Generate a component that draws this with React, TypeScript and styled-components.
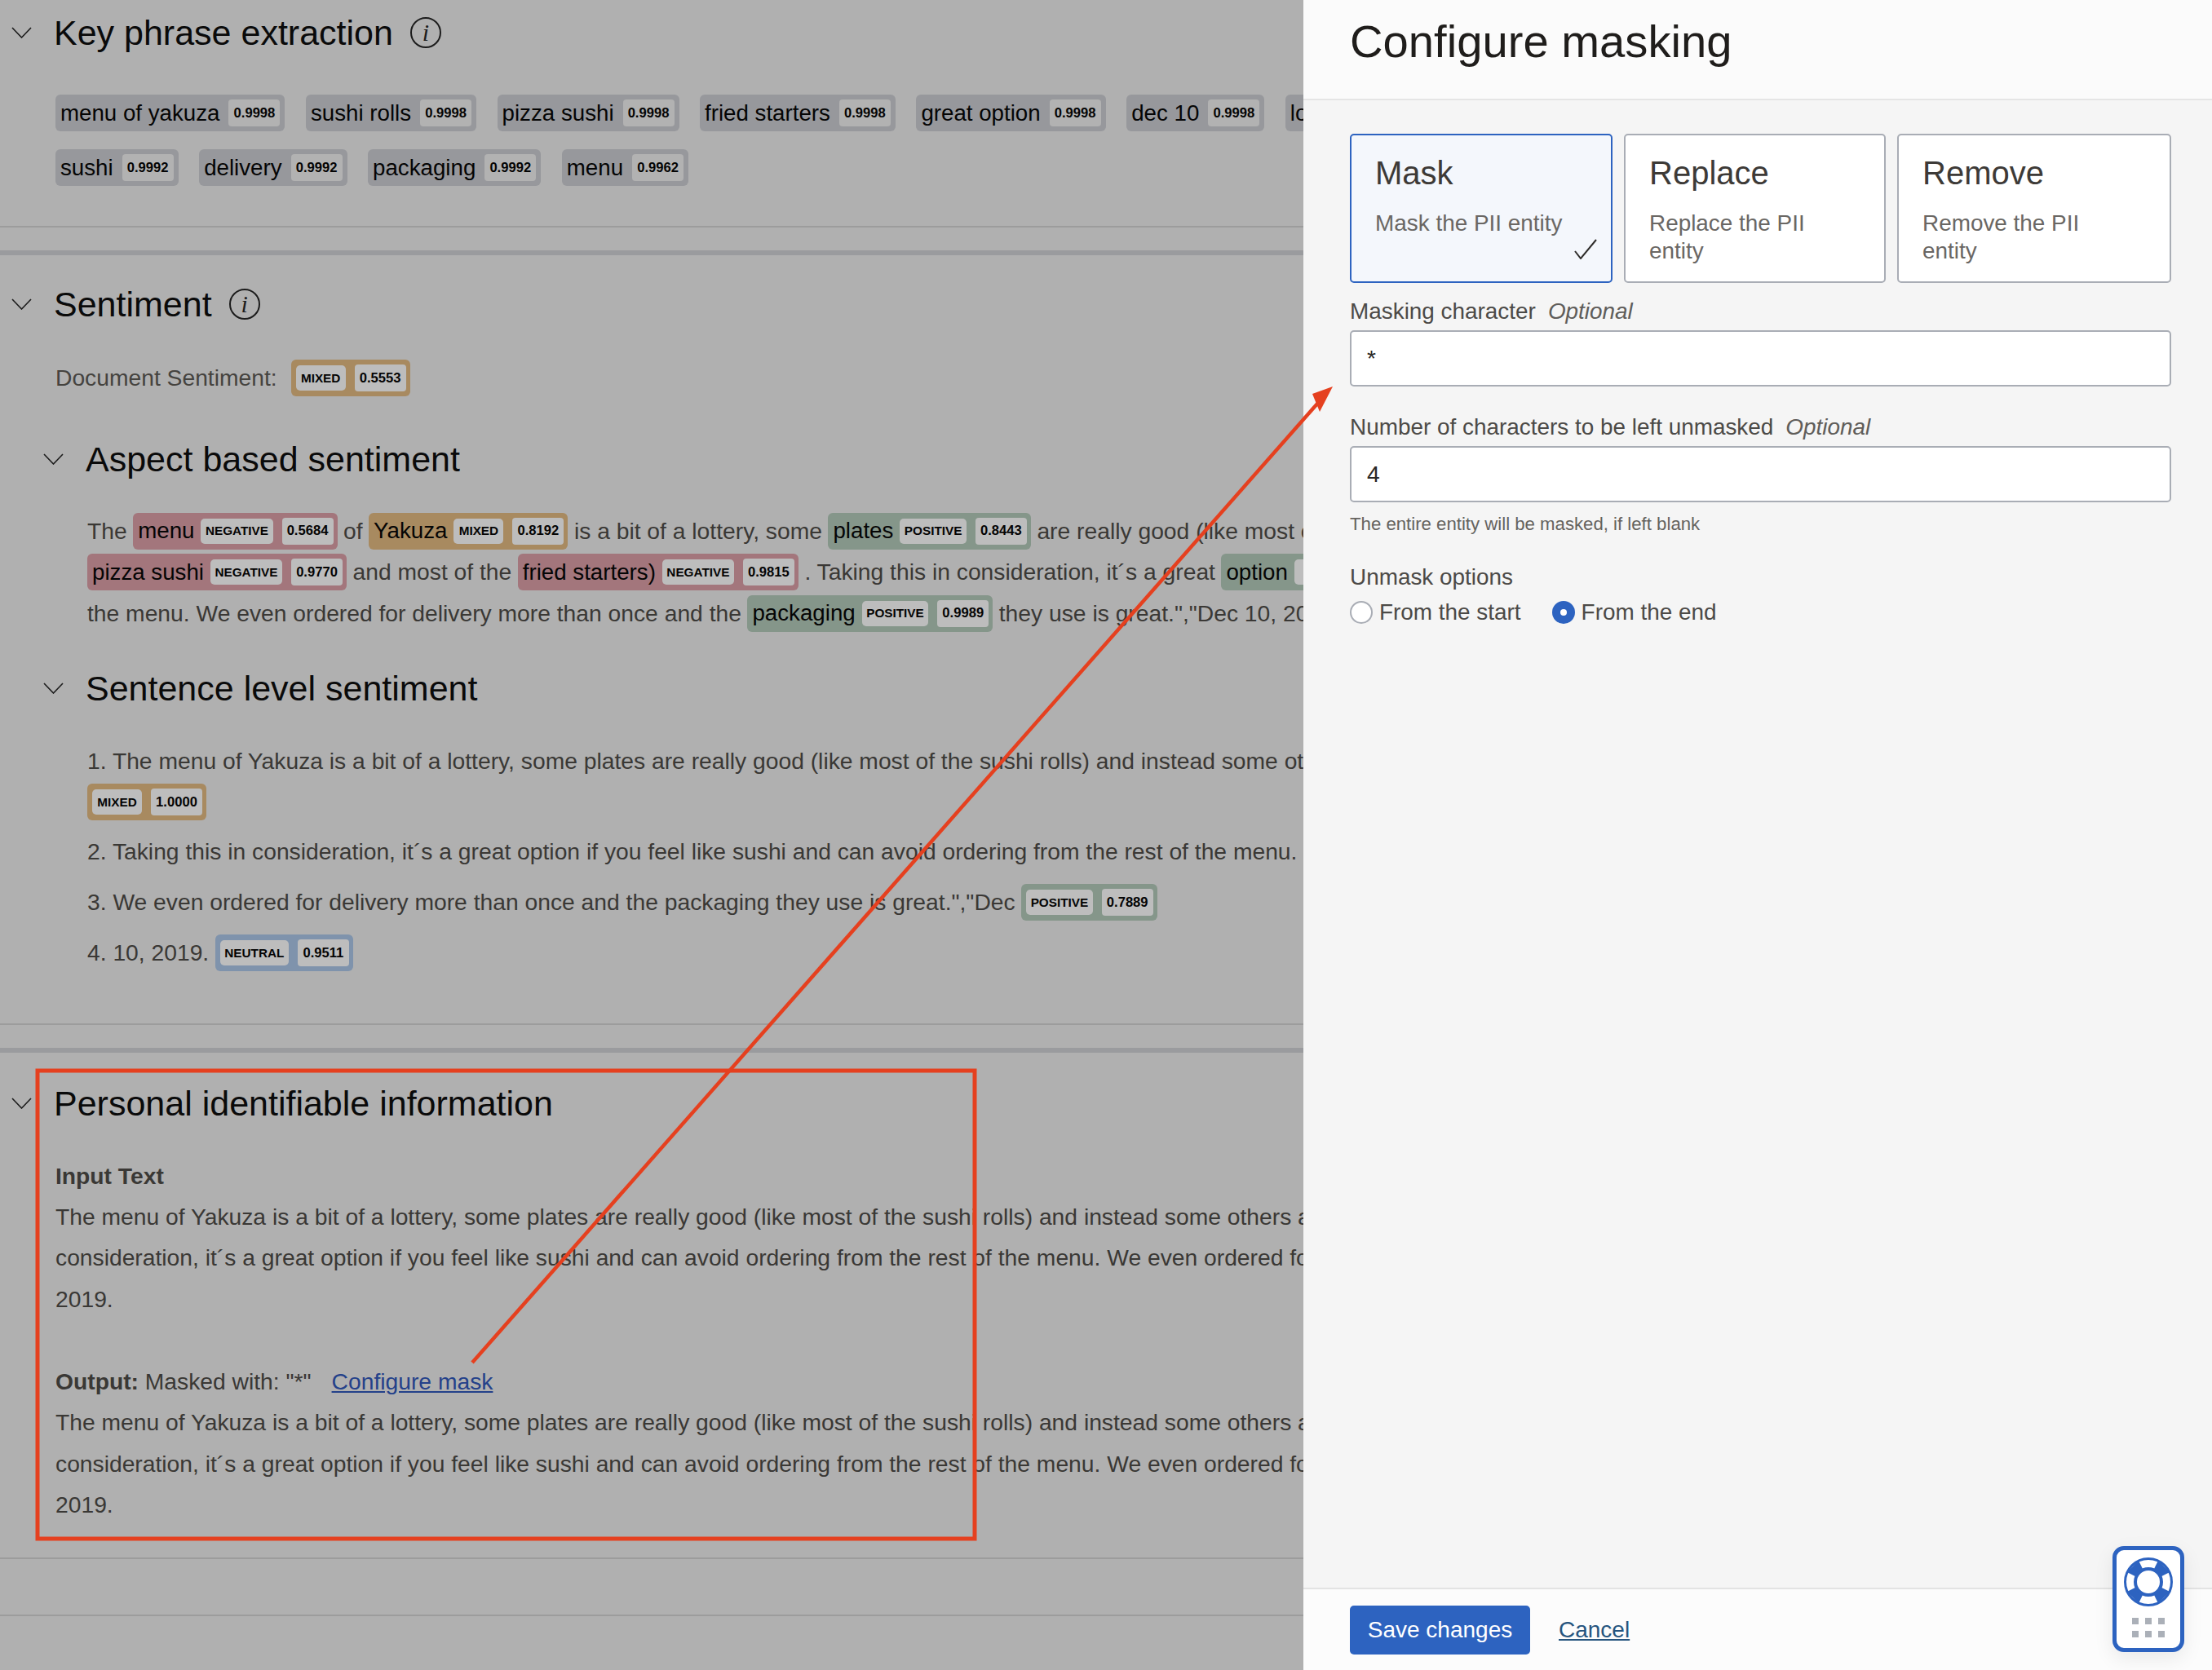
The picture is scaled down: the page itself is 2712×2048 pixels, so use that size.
import React from "react";
import styled, { createGlobalStyle } from "styled-components";

type Tone = "plain" | "negative" | "mixed" | "positive" | "neutral";

const TONES: Record<Tone, string> = {
    plain: "#97989c",
    negative: "#a3767c",
    mixed: "#a88a60",
    positive: "#85968a",
    neutral: "#7f93ac",
};

const BLUE = "#2d63c0";
const FIELD_BORDER = "#a9adb5";

const GlobalStyle = createGlobalStyle`
    html, body {
        margin: 0;
        padding: 0;
    }
    body {
        font-family: "Liberation Sans", Arial, sans-serif;
        font-size: 28.25px;
        color: #3a3835;
    }
`;

const Page = styled.div`
    position: relative;
    display: flex;
    width: 2712px;
    height: 2048px;
    overflow: hidden;
`;
const Main = styled.main`
    width: 1598px;
    flex: none;
    overflow: hidden;
    background: #b0b0b0;
`;
const FirstSection = styled.section`
    padding: 15px 0 49px;
    border-bottom: 2px solid #9c9c9c;
`;
const Section = styled.section<{ $top: number; $bottom: number }>`
    margin-top: 28px;
    padding: ${(p) => p.$top}px 0 ${(p) => p.$bottom}px;
    border-top: 6px solid #9a9b9e;
    border-bottom: 2px solid #9c9c9c;
`;
const Rule = styled.div`
    margin-top: 68px;
    border-top: 2px solid #9c9c9c;
`;
const HeadingRow = styled.div<{ $indent?: number }>`
    display: flex;
    align-items: center;
    height: 50px;
    padding-left: ${(p) => p.$indent ?? 14}px;
`;
const Chevron = styled.svg`
    width: 25px;
    height: 14px;
    margin-right: 27px;
    flex: none;
    fill: none;
    stroke: #1c1c1c;
    stroke-width: 1.6;
`;
const Heading = styled.h2`
    margin: 0;
    font-size: 43px;
    font-weight: 400;
    line-height: 50px;
    color: #0a0a0a;
    white-space: nowrap;
`;
const InfoIcon = styled.span`
    display: inline-flex;
    align-items: center;
    justify-content: center;
    width: 34px;
    height: 34px;
    margin-left: 21px;
    border: 2px solid #1c1c1c;
    border-radius: 50%;
    font-family: "Liberation Serif", serif;
    font-size: 30px;
    font-style: italic;
    color: #1c1c1c;
`;
const PhraseRows = styled.div`
    display: flex;
    flex-direction: column;
    gap: 22px;
    margin-top: 51px;
    padding-left: 68px;
`;
const PhraseRow = styled.div`
    display: flex;
    gap: 25.5px;
`;
const Chip = styled.span<{ $tone: Tone }>`
    display: inline-flex;
    align-items: center;
    flex: none;
    gap: ${(p) => (p.$tone === "plain" ? 11 : 8)}px;
    height: 45px;
    padding: 0 ${(p) => (p.$tone === "plain" ? 6 : 5)}px 0 6px;
    border-radius: 6px;
    background: ${(p) => TONES[p.$tone]};
    color: #050505;
    white-space: nowrap;
`;
const ChipWord = styled.span`
    font-size: 27.7px;
`;
const ChipLabel = styled.span`
    display: inline-flex;
    align-items: center;
    justify-content: center;
    box-sizing: border-box;
    min-width: 61px;
    height: 31px;
    margin-right: 3px;
    padding: 0 5.5px;
    border-radius: 5px;
    background: #bdbdbd;
    font-size: 15.3px;
    font-weight: 700;
`;
const ChipScore = styled.span<{ $plain?: boolean }>`
    display: inline-flex;
    align-items: center;
    justify-content: center;
    width: 63px;
    height: 33px;
    border-radius: 4px;
    background: ${(p) => (p.$plain ? "#b2b2b2" : "#bdbdbd")};
    font-size: 16.6px;
    font-weight: 700;
`;
const DocumentRow = styled.div`
    display: flex;
    align-items: center;
    gap: 17px;
    margin-top: 43px;
    padding-left: 68px;
    color: #45433f;
`;
const SubSection = styled.div<{ $top: number }>`
    margin-top: ${(p) => p.$top}px;
`;
const TextBlock = styled.div<{ $top: number }>`
    margin-top: ${(p) => p.$top}px;
    padding-left: 107px;
`;
const TextLine = styled.div`
    display: flex;
    align-items: center;
    gap: 7.5px;
    height: 50.5px;
    white-space: pre;
`;
const SentenceLine = styled(TextLine)<{ $gap?: number }>`
    height: 50px;
    margin-top: ${(p) => p.$gap ?? 0}px;
`;
const PlainBlock = styled.div`
    margin-top: 39px;
    padding-left: 68px;
`;
const PlainLine = styled.div<{ $gap?: number }>`
    height: 50.4px;
    margin-top: ${(p) => p.$gap ?? 0}px;
    line-height: 50.4px;
    white-space: pre;
`;
const ConfigureLink = styled.a`
    margin-left: 25px;
    color: #24418a;
    text-decoration: underline;
`;

const Drawer = styled.aside`
    display: flex;
    flex-direction: column;
    flex: 1;
    background: #f5f5f5;
`;
const DrawerHeader = styled.header`
    display: flex;
    align-items: center;
    height: 101px;
    padding: 0 57px 20px;
    border-bottom: 2px solid #e5e5e5;
    background: #fbfbfb;
`;
const DrawerTitle = styled.h1`
    margin: 0;
    font-size: 56.2px;
    font-weight: 400;
    color: #1f1d1b;
`;
const DrawerBody = styled.div`
    flex: 1;
    padding: 41px 50px 0 57px;
`;
const CardGrid = styled.div`
    display: grid;
    grid-template-columns: 322px 321px 1fr;
    gap: 14px;
`;
const Card = styled.div<{ $selected?: boolean }>`
    position: relative;
    box-sizing: border-box;
    height: 183px;
    padding: 21px 29px 0;
    border: 2px solid ${(p) => (p.$selected ? BLUE : FIELD_BORDER)};
    border-radius: 5px;
    background: ${(p) => (p.$selected ? "#f4f7fc" : "#ffffff")};
`;
const CardTitle = styled.div`
    font-size: 40px;
    line-height: 50px;
    color: #3d3a37;
`;
const CardText = styled.div`
    max-width: 250px;
    margin-top: 20px;
    font-size: 27.9px;
    line-height: 34px;
    color: #6a6764;
`;
const CardCheck = styled.svg`
    position: absolute;
    right: 17px;
    bottom: 27px;
    width: 28px;
    height: 25px;
    fill: none;
    stroke: #2f2d2b;
    stroke-width: 2;
`;
const FieldLabel = styled.div<{ $top: number }>`
    height: 36px;
    margin-top: ${(p) => p.$top}px;
    font-size: 27.9px;
    line-height: 36px;
    color: #4c4a47;
`;
const OptionalMark = styled.em`
    margin-left: 15px;
    color: #5f5d5a;
`;
const TextInput = styled.input<{ $top: number }>`
    display: block;
    box-sizing: border-box;
    width: 100%;
    height: 69px;
    margin-top: ${(p) => p.$top}px;
    padding: 0 19px;
    border: 2px solid ${FIELD_BORDER};
    border-radius: 5px;
    outline: none;
    background: #ffffff;
    font-family: inherit;
    font-size: 28.15px;
    color: #2a2826;
`;
const Hint = styled.div`
    margin-top: 12px;
    font-size: 22.2px;
    line-height: 30px;
    color: #65635f;
`;
const RadioRow = styled.div`
    display: flex;
    gap: 38px;
    margin-top: 7px;
`;
const RadioOption = styled.label`
    display: flex;
    align-items: center;
    gap: 8px;
    height: 36px;
    font-size: 27.9px;
    color: #4c4a47;
`;
const RadioDot = styled.span<{ $checked?: boolean }>`
    display: flex;
    align-items: center;
    justify-content: center;
    box-sizing: border-box;
    width: 28px;
    height: 28px;
    border: 2px solid ${(p) => (p.$checked ? BLUE : FIELD_BORDER)};
    border-radius: 50%;
    background: ${(p) => (p.$checked ? BLUE : "#ffffff")};

    &::after {
        content: "";
        width: 8px;
        height: 8px;
        border-radius: 50%;
        background: ${(p) => (p.$checked ? "#ffffff" : "transparent")};
    }
`;
const DrawerFooter = styled.footer`
    display: flex;
    align-items: center;
    gap: 35px;
    height: 99px;
    padding: 0 57px;
    border-top: 2px solid #e3e3e3;
    background: #fcfcfc;
`;
const SaveButton = styled.button`
    width: 221px;
    height: 60px;
    border: 0;
    border-radius: 5px;
    background: ${BLUE};
    font-family: inherit;
    font-size: 28px;
    color: #ffffff;
`;
const CancelLink = styled.a`
    font-size: 28px;
    color: #26557f;
    text-decoration: underline;
`;
const HelpWidget = styled.div`
    position: absolute;
    left: 2590px;
    top: 1896px;
    display: flex;
    flex-direction: column;
    align-items: center;
    box-sizing: border-box;
    width: 88px;
    height: 130px;
    padding-top: 9px;
    border: 5px solid ${BLUE};
    border-radius: 14px;
    background: #ffffff;
    box-shadow: 0 8px 24px rgba(0, 0, 0, 0.08);
`;
const HelpDots = styled.div`
    display: grid;
    grid-template-columns: repeat(3, 8px);
    gap: 8px;
    margin-top: 14px;
`;
const HelpDot = styled.span`
    width: 8px;
    height: 8px;
    background: #abb0b8;
`;
const Annotation = styled.svg`
    position: absolute;
    left: 0;
    top: 0;
    width: 2712px;
    height: 2048px;
    pointer-events: none;
`;

const KEY_PHRASES = [
    [
        ["menu of yakuza", "0.9998"],
        ["sushi rolls", "0.9998"],
        ["pizza sushi", "0.9998"],
        ["fried starters", "0.9998"],
        ["great option", "0.9998"],
        ["dec 10", "0.9998"],
        ["lo", ""],
    ],
    [
        ["sushi", "0.9992"],
        ["delivery", "0.9992"],
        ["packaging", "0.9992"],
        ["menu", "0.9962"],
    ],
];

const INPUT_LINES = [
    "The menu of Yakuza is a bit of a lottery, some plates are really good (like most of the sushi rolls) and instead some others a",
    "consideration, it´s a great option if you feel like sushi and can avoid ordering from the rest of the menu. We even ordered fo",
    "2019.",
];

const ChevronIcon: React.FC = () => (
    <Chevron viewBox="0 0 25 14">
        <path d="M1 1l11.5 12L24 1" />
    </Chevron>
);

const Sentiment: React.FC<{ tone: Tone; word?: string; label: string; score?: string }> = ({
    tone,
    word,
    label,
    score,
}) => (
    <Chip $tone={tone}>
        {word && <ChipWord>{word}</ChipWord>}
        <ChipLabel>{label}</ChipLabel>
        {score && <ChipScore>{score}</ChipScore>}
    </Chip>
);

const RingSegment: React.FC<{ angle: number }> = ({ angle }) => (
    <polygon points="-6,-15 6,-15 10,-27 -10,-27" fill={BLUE} transform={`rotate(${angle})`} />
);

const App: React.FC = () => {
    return (
        <Page>
            <GlobalStyle />
            <Main>
                <FirstSection>
                    <HeadingRow>
                        <ChevronIcon />
                        <Heading>Key phrase extraction</Heading>
                        <InfoIcon>i</InfoIcon>
                    </HeadingRow>
                    <PhraseRows>
                        {KEY_PHRASES.map((row, idx) => (
                            <PhraseRow key={idx}>
                                {row.map(([word, score]) => (
                                    <Chip key={word} $tone="plain">
                                        <ChipWord>{word}</ChipWord>
                                        {score && <ChipScore $plain>{score}</ChipScore>}
                                    </Chip>
                                ))}
                            </PhraseRow>
                        ))}
                    </PhraseRows>
                </FirstSection>

                <Section $top={35} $bottom={61}>
                    <HeadingRow>
                        <ChevronIcon />
                        <Heading>Sentiment</Heading>
                        <InfoIcon>i</InfoIcon>
                    </HeadingRow>
                    <DocumentRow>
                        Document Sentiment:
                        <Sentiment tone="mixed" label="MIXED" score="0.5553" />
                    </DocumentRow>

                    <SubSection $top={52}>
                        <HeadingRow $indent={53}>
                            <ChevronIcon />
                            <Heading>Aspect based sentiment</Heading>
                        </HeadingRow>
                        <TextBlock $top={38}>
                            <TextLine>
                                The
                                <Sentiment tone="negative" word="menu" label="NEGATIVE" score="0.5684" />
                                of
                                <Sentiment tone="mixed" word="Yakuza" label="MIXED" score="0.8192" />
                                is a bit of a lottery, some
                                <Sentiment tone="positive" word="plates" label="POSITIVE" score="0.8443" />
                                are really good (like most o
                            </TextLine>
                            <TextLine>
                                <Sentiment tone="negative" word="pizza sushi" label="NEGATIVE" score="0.9770" />
                                and most of the
                                <Sentiment tone="negative" word="fried starters)" label="NEGATIVE" score="0.9815" />
                                . Taking this in consideration, it´s a great
                                <Sentiment tone="positive" word="option" label="" />
                            </TextLine>
                            <TextLine>
                                the menu. We even ordered for delivery more than once and the
                                <Sentiment tone="positive" word="packaging" label="POSITIVE" score="0.9989" />
                                they use is great.","Dec 10, 20
                            </TextLine>
                        </TextBlock>
                    </SubSection>

                    <SubSection $top={41}>
                        <HeadingRow $indent={53}>
                            <ChevronIcon />
                            <Heading>Sentence level sentiment</Heading>
                        </HeadingRow>
                        <TextBlock $top={40}>
                            <SentenceLine>
                                1. The menu of Yakuza is a bit of a lottery, some plates are really good (like most of the sushi rolls) and instead some oth
                            </SentenceLine>
                            <SentenceLine>
                                <Sentiment tone="mixed" label="MIXED" score="1.0000" />
                            </SentenceLine>
                            <SentenceLine $gap={11}>
                                2. Taking this in consideration, it´s a great option if you feel like sushi and can avoid ordering from the rest of the menu.
                            </SentenceLine>
                            <SentenceLine $gap={12}>
                                3. We even ordered for delivery more than once and the packaging they use is great.","Dec
                                <Sentiment tone="positive" label="POSITIVE" score="0.7889" />
                            </SentenceLine>
                            <SentenceLine $gap={12}>
                                4. 10, 2019.
                                <Sentiment tone="neutral" label="NEUTRAL" score="0.9511" />
                            </SentenceLine>
                        </TextBlock>
                    </SubSection>
                </Section>

                <Section $top={37} $bottom={39}>
                    <HeadingRow>
                        <ChevronIcon />
                        <Heading>Personal identifiable information</Heading>
                    </HeadingRow>
                    <PlainBlock>
                        <PlainLine>
                            <b>Input Text</b>
                        </PlainLine>
                        {INPUT_LINES.map((line) => (
                            <PlainLine key={line}>{line}</PlainLine>
                        ))}
                        <PlainLine $gap={51}>
                            <b>Output:</b> Masked with: "*"
                            <ConfigureLink>Configure mask</ConfigureLink>
                        </PlainLine>
                        {INPUT_LINES.map((line) => (
                            <PlainLine key={line}>{line}</PlainLine>
                        ))}
                    </PlainBlock>
                </Section>
                <Rule />
            </Main>

            <Drawer>
                <DrawerHeader>
                    <DrawerTitle>Configure masking</DrawerTitle>
                </DrawerHeader>
                <DrawerBody>
                    <CardGrid>
                        <Card $selected>
                            <CardTitle>Mask</CardTitle>
                            <CardText>Mask the PII entity</CardText>
                            <CardCheck viewBox="0 0 28 25">
                                <path d="M1 15l7 9L27 1" />
                            </CardCheck>
                        </Card>
                        <Card>
                            <CardTitle>Replace</CardTitle>
                            <CardText>Replace the PII entity</CardText>
                        </Card>
                        <Card>
                            <CardTitle>Remove</CardTitle>
                            <CardText>Remove the PII entity</CardText>
                        </Card>
                    </CardGrid>
                    <FieldLabel $top={17}>
                        Masking character<OptionalMark>Optional</OptionalMark>
                    </FieldLabel>
                    <TextInput $top={5} value="*" readOnly />
                    <FieldLabel $top={32}>
                        Number of characters to be left unmasked<OptionalMark>Optional</OptionalMark>
                    </FieldLabel>
                    <TextInput $top={5} value="4" readOnly />
                    <Hint>The entire entity will be masked, if left blank</Hint>
                    <FieldLabel $top={32}>Unmask options</FieldLabel>
                    <RadioRow>
                        <RadioOption>
                            <RadioDot />
                            From the start
                        </RadioOption>
                        <RadioOption>
                            <RadioDot $checked />
                            From the end
                        </RadioOption>
                    </RadioRow>
                </DrawerBody>
                <DrawerFooter>
                    <SaveButton>Save changes</SaveButton>
                    <CancelLink>Cancel</CancelLink>
                </DrawerFooter>
            </Drawer>

            <HelpWidget>
                <svg width="60" height="60" viewBox="-30 -30 60 60">
                    <circle r="28.5" fill="#fff" stroke={BLUE} strokeWidth="3" />
                    {[45, 135, 225, 315].map((angle) => (
                        <RingSegment key={angle} angle={angle} />
                    ))}
                    <circle r="16" fill="#fff" stroke={BLUE} strokeWidth="4" />
                </svg>
                <HelpDots>
                    {[0, 1, 2, 3, 4, 5].map((idx) => (
                        <HelpDot key={idx} />
                    ))}
                </HelpDots>
            </HelpWidget>

            <Annotation viewBox="0 0 2712 2048">
                <rect x="46" y="1313" width="1149" height="574" fill="none" stroke="#e5401f" strokeWidth="5" />
                <line x1="579" y1="1671" x2="1616" y2="494" stroke="#e5401f" strokeWidth="4.5" />
                <polygon points="1634,474 1609,483 1618,505" fill="#e5401f" />
            </Annotation>
        </Page>
    );
};

export default App;
